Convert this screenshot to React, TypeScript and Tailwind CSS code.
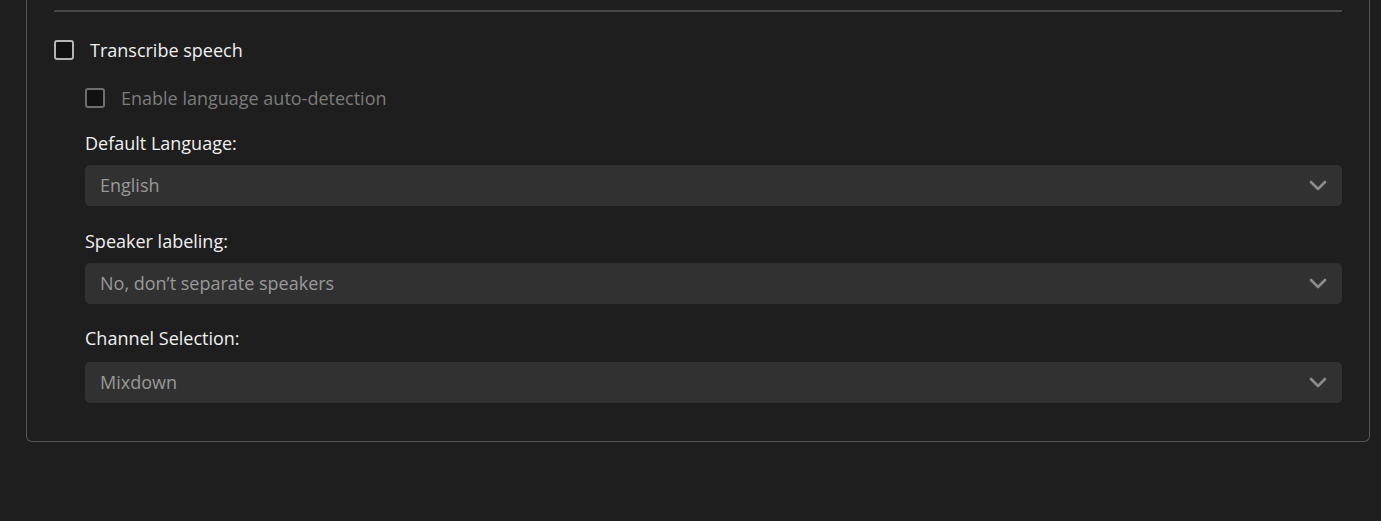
import React from 'react';

const font = { fontFamily: '"Open Sans", "Noto Sans", sans-serif' };

const Chevron: React.FC = () => (
  <svg width="18" height="11" viewBox="0 0 18 11" fill="none">
    <path d="M2 2l7 7 7-7" stroke="#8c8c8c" strokeWidth="2.6" strokeLinecap="round" strokeLinejoin="round" />
  </svg>
);

const Select: React.FC<{ value: string }> = ({ value }) => (
  <div className="h-[41px] rounded-[5px] bg-[#313131] flex items-center justify-between pl-[15px] pr-[15px]">
    <span className="text-[18px] text-[#999999]">{value}</span>
    <Chevron />
  </div>
);

const Checkbox: React.FC<{ disabled?: boolean }> = ({ disabled }) => (
  <span
    className={`inline-block w-[20px] h-[20px] rounded-[3px] border-2 bg-[#111111] ${
      disabled ? 'border-[#6e6e6e]' : 'border-[#b4b4b4]'
    }`}
  />
);

export default function App() {
  return (
    <div className="w-[1381px] h-[521px] bg-[#1e1e1e] overflow-hidden" style={font}>
      <div className="ml-[26px] w-[1344px] border border-t-0 border-[#575757] rounded-b-[6px] px-[27px] pt-[10px] pb-[38px]">
        <div className="h-[2px] bg-[#484848]" />

        {/* Transcribe speech */}
        <div className="flex items-center gap-[16px] mt-[28px]">
          <Checkbox />
          <span className="text-[18px] leading-[20px] text-[#f0f0f0]">Transcribe speech</span>
        </div>

        <div className="pl-[31px]">
          <div className="flex items-center gap-[16px] mt-[28px]">
            <Checkbox disabled />
            <span className="text-[18px] leading-[20px] text-[#7c7c7c]">Enable language auto-detection</span>
          </div>

          <div className="mt-[23px] text-[18px] leading-[24px] text-[#f0f0f0]">Default Language:</div>
          <div className="mt-[10px]">
            <Select value="English" />
          </div>

          <div className="mt-[23px] text-[18px] leading-[24px] text-[#f0f0f0]">Speaker labeling:</div>
          <div className="mt-[10px]">
            <Select value="No, don’t separate speakers" />
          </div>

          <div className="mt-[22px] text-[18px] leading-[24px] text-[#f0f0f0]">Channel Selection:</div>
          <div className="mt-[12px]">
            <Select value="Mixdown" />
          </div>
        </div>
      </div>
    </div>
  );
}
